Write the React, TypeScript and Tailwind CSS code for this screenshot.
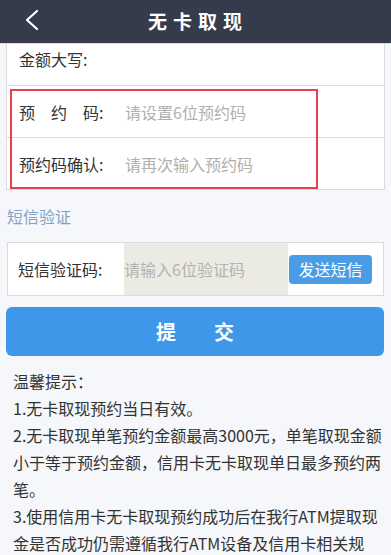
const font = { fontFamily: '"Noto Sans CJK SC", "Noto Sans", sans-serif' }

const tips = [
  "温馨提示：",
  "1.无卡取现预约当日有效。",
  "2.无卡取现单笔预约金额最高3000元，单笔取现金额",
  "小于等于预约金额，信用卡无卡取现单日最多预约两",
  "笔。",
  "3.使用信用卡无卡取现预约成功后在我行ATM提取现",
  "金是否成功仍需遵循我行ATM设备及信用卡相关规",
  "定。",
]

const App = () => {
  return (
    <div className="relative h-[555px] w-[391px] overflow-hidden bg-[#f5f7fa]" style={font}>
      {/* header */}
      <div className="relative flex h-[44px] items-center justify-center border-b border-[#d9dce2] bg-[#363b4b]">
        <svg className="absolute left-[24px] top-[9px]" width="16" height="22" viewBox="0 0 16 22">
          <path d="M13 2 L3 11 L13 20" fill="none" stroke="#ffffff" strokeWidth="2.2" strokeLinecap="round" strokeLinejoin="round" />
        </svg>
        <h1 className="pl-[5px] text-[19px] font-bold tracking-[6px] text-white">无卡取现</h1>
      </div>

      {/* amount / code card */}
      <div className="mx-[6px] border-x border-b border-[#dcdcdc] bg-white text-[16px] text-[#333]">
        <div className="flex h-[42px] items-start border-b border-[#dcdcdc] pl-[12px] pt-[3px] leading-[24px]">金额大写:</div>
        <div className="flex h-[52px] items-center border-b border-[#dcdcdc] pl-[12px]">
          <span className="w-[106px]">预　约　码:</span>
          <span className="text-[#b0b0b0]">请设置6位预约码</span>
        </div>
        <div className="flex h-[51px] items-center pl-[12px]">
          <span className="w-[106px]">预约码确认:</span>
          <span className="text-[#b0b0b0]">请再次输入预约码</span>
        </div>
      </div>

      {/* annotation box */}
      <div className="absolute left-[10px] top-[89px] h-[100px] w-[308px] border-2 border-[#ea3f4d]" />

      <p className="flex h-[52px] items-center pl-[7px] text-[16px] text-[#83a2c8]">短信验证</p>

      {/* sms card */}
      <div className="mx-[7px] flex h-[54px] items-stretch border border-[#dcdcdc] bg-white text-[16px]">
        <span className="flex w-[116px] items-center pl-[10px] text-[#333]">短信验证码:</span>
        <span className="flex w-[164px] items-center bg-[#ebebe4] text-[#b3b3b0]">请输入6位验证码</span>
        <span className="flex flex-1 items-center pl-[1px]">
          <button className="flex h-[29px] w-[83px] items-center justify-center rounded-[4px] bg-[#4a9ce7] text-[16px] text-white">发送短信</button>
        </span>
      </div>

      <button className="mx-[6px] mt-[11px] flex h-[49px] w-[378px] items-center justify-center gap-[38px] rounded-[6px] bg-[#3e97e9] text-[20px] font-bold text-white">
        <span>提</span>
        <span>交</span>
      </button>

      {/* tips */}
      <div className="mt-[12px] pl-[13px] text-[16px] leading-[27px] text-[#333]">
        {tips.map((t) => (
          <p key={t} className="whitespace-nowrap">{t}</p>
        ))}
      </div>
    </div>
  )
}

export default App
